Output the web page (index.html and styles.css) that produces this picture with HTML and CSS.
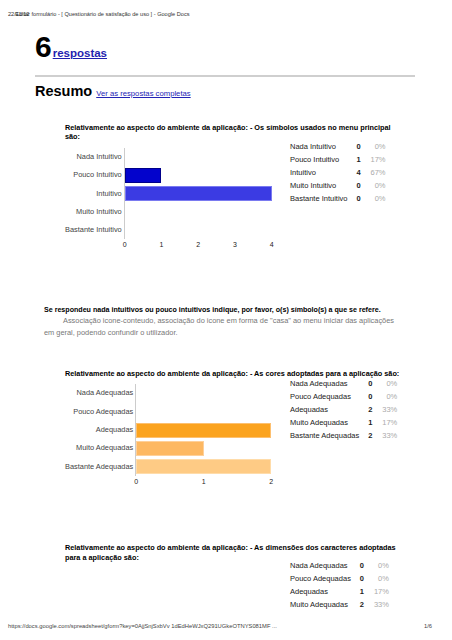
FILE: index.html
```html
<!DOCTYPE html>
<html lang="pt">
<head>
    <meta charset="UTF-8">
    <title>Editar formulário - [ Questionário de satisfação de uso ] - Google Docs</title>
    <link rel="stylesheet" href="styles.css">
</head>
<body>

    <div class="topbar">
        <span class="date">22/11/12</span>Editar formulário - [ Questionário de satisfação de uso ] - Google Docs
    </div>

    <div class="page">
        <div class="count">
            <span class="count-num">6</span><a href="#" class="count-link">respostas</a>
        </div>

        <div class="summary-head">
            <h2>Resumo</h2>
            <a href="#">Ver as respostas completas</a>
        </div>

        <!-- pergunta 1 -->
        <div class="question q1">
            <p class="q-title">Relativamente ao aspecto do ambiente da aplicação: - Os símbolos usados no menu principal são:</p>
            <div class="result">
                <div class="chart">
                    <div class="chart-grid">
                        <span class="bar-label">Nada Intuitivo</span>
                        <div class="bar-cell"></div>
                        <span class="bar-label">Pouco Intuitivo</span>
                        <div class="bar-cell"><div class="bar blue-dark" style="width: 25%;"></div></div>
                        <span class="bar-label">Intuitivo</span>
                        <div class="bar-cell"><div class="bar blue" style="width: 100%;"></div></div>
                        <span class="bar-label">Muito Intuitivo</span>
                        <div class="bar-cell"></div>
                        <span class="bar-label">Bastante Intuitivo</span>
                        <div class="bar-cell"></div>
                        <span></span>
                        <div class="ticks">
                            <span>0</span><span>1</span><span>2</span><span>3</span><span>4</span>
                        </div>
                    </div>
                </div>
                <table class="counts">
                    <tr><td>Nada Intuitivo</td><td class="n">0</td><td class="pct">0%</td></tr>
                    <tr><td>Pouco Intuitivo</td><td class="n">1</td><td class="pct">17%</td></tr>
                    <tr><td>Intuitivo</td><td class="n">4</td><td class="pct">67%</td></tr>
                    <tr><td>Muito Intuitivo</td><td class="n">0</td><td class="pct">0%</td></tr>
                    <tr><td>Bastante Intuitivo</td><td class="n">0</td><td class="pct">0%</td></tr>
                </table>
            </div>
        </div>

        <!-- pergunta 2 (texto) -->
        <div class="question q2">
            <p class="q-title">Se respondeu nada intuitivos ou pouco intuitivos indique, por favor, o(s) símbolo(s) a que se refere.</p>
            <p class="answer">Associação icone-conteudo, associação do icone em forma de "casa" ao menu iniciar das aplicações em geral, podendo confundir o utilizador.</p>
        </div>

        <!-- pergunta 3 -->
        <div class="question q3">
            <p class="q-title">Relativamente ao aspecto do ambiente da aplicação: - As cores adoptadas para a aplicação são:</p>
            <div class="result">
                <div class="chart">
                    <div class="chart-grid">
                        <span class="bar-label">Nada Adequadas</span>
                        <div class="bar-cell"></div>
                        <span class="bar-label">Pouco Adequadas</span>
                        <div class="bar-cell"></div>
                        <span class="bar-label">Adequadas</span>
                        <div class="bar-cell"><div class="bar orange" style="width: 100%;"></div></div>
                        <span class="bar-label">Muito Adequadas</span>
                        <div class="bar-cell"><div class="bar orange-mid" style="width: 50%;"></div></div>
                        <span class="bar-label">Bastante Adequadas</span>
                        <div class="bar-cell"><div class="bar orange-light" style="width: 100%;"></div></div>
                        <span></span>
                        <div class="ticks">
                            <span>0</span><span>1</span><span>2</span>
                        </div>
                    </div>
                </div>
                <table class="counts">
                    <tr><td>Nada Adequadas</td><td class="n">0</td><td class="pct">0%</td></tr>
                    <tr><td>Pouco Adequadas</td><td class="n">0</td><td class="pct">0%</td></tr>
                    <tr><td>Adequadas</td><td class="n">2</td><td class="pct">33%</td></tr>
                    <tr><td>Muito Adequadas</td><td class="n">1</td><td class="pct">17%</td></tr>
                    <tr><td>Bastante Adequadas</td><td class="n">2</td><td class="pct">33%</td></tr>
                </table>
            </div>
        </div>

        <!-- pergunta 4 -->
        <div class="question q4">
            <p class="q-title">Relativamente ao aspecto do ambiente da aplicação: - As dimensões dos caracteres adoptadas para a aplicação são:</p>
            <div class="result">
                <div class="chart"></div>
                <table class="counts">
                    <tr><td>Nada Adequadas</td><td class="n">0</td><td class="pct">0%</td></tr>
                    <tr><td>Pouco Adequadas</td><td class="n">0</td><td class="pct">0%</td></tr>
                    <tr><td>Adequadas</td><td class="n">1</td><td class="pct">17%</td></tr>
                    <tr><td>Muito Adequadas</td><td class="n">2</td><td class="pct">33%</td></tr>
                </table>
            </div>
        </div>
    </div>

    <div class="footer">
        <span>https://docs.google.com/spreadsheet/gform?key=0AjjSnjSxbVv 1dEdHeWJxQ291UGkeOTNYS081MF ...</span>
        <span>1/6</span>
    </div>

</body>
</html>
```

FILE: styles.css
```css
body {
    font-family: 'Liberation Sans', Arial, sans-serif;
    background-color: white;
    color: #222;
    margin: 0;
    padding: 0;
    width: 452px;
    height: 640px;
    overflow: hidden;
}

p {
    margin: 0;
}

.topbar {
    padding: 10px 8px 0;
    font-size: 5.6px;
    line-height: 8px;
    color: #333;
    white-space: nowrap;
}

.topbar .date {
    margin-right: -14px;
}

.page {
    margin: 0 37px 0 35px;
}

/* total de respostas */
.count {
    margin-top: 14px;
    height: 30px;
    line-height: 30px;
    white-space: nowrap;
}

.count-num {
    font-size: 30px;
    font-weight: bold;
    color: #000;
}

.count-link {
    font-size: 11.5px;
    font-weight: bold;
    color: #1f1fb0;
    margin-left: 1px;
}

.summary-head {
    margin-top: 13px;
    border-top: 2px solid #cfcfcf;
    padding-top: 7px;
    display: flex;
    align-items: baseline;
    gap: 4px;
}

.summary-head h2 {
    margin: 0;
    font-size: 14.5px;
    line-height: 15px;
    color: #000;
}

.summary-head a {
    font-size: 7.7px;
    color: #2323b5;
}

/* perguntas */
.question {
    padding-left: 30px;
}

.q-title {
    font-size: 7.3px;
    line-height: 9px;
    font-weight: bold;
    color: #000;
    width: 338px;
}

.q1 {
    margin-top: 24px;
}

.q2 {
    margin-top: 57px;
    padding-left: 9px;
}

.q2 .q-title {
    width: 360px;
    font-size: 7.1px;
}

.q2 .answer {
    width: 360px;
    font-size: 7.4px;
    line-height: 12px;
    color: #777;
    text-indent: 19px;
}

.q3 {
    margin-top: 30px;
}

.q4 {
    margin-top: 57px;
}

.q4 .q-title {
    line-height: 10px;
}

.result {
    display: flex;
    align-items: flex-start;
    gap: 15px;
}

.q4 .counts {
    margin-top: -3px;
}

/* gráfico de barras */
.chart {
    width: 210px;
    flex-shrink: 0;
}

.chart-grid {
    display: grid;
    grid-template-columns: auto 148px;
    justify-content: start;
    column-gap: 2px;
    margin-top: 7px;
}

.q3 .chart-grid {
    grid-template-columns: auto 136px;
    margin-top: 6px;
}

.bar-label {
    font-size: 7.4px;
    color: #444;
    text-align: right;
    line-height: 18.3px;
    white-space: nowrap;
}

.bar-cell {
    height: 18.3px;
    border-left: 1px solid #ccc;
    display: flex;
    align-items: center;
}

.bar {
    height: 15px;
    box-sizing: border-box;
}

.blue-dark {
    background-color: #0303cc;
    border: 1px solid #00008a;
}

.blue {
    background-color: #3b3be3;
    border: 1px solid #7a7af0;
}

.orange {
    background-color: #fba31f;
    border: 1px solid #fdc070;
}

.orange-mid {
    background-color: #fdb862;
    border: 1px solid #fed09a;
}

.orange-light {
    background-color: #fecb85;
    border: 1px solid #ffdcaa;
}

.ticks {
    display: flex;
    justify-content: space-between;
    margin: 2px -5px 0 -4px;
    font-size: 7px;
    line-height: 8px;
    color: #222;
}

.ticks span {
    width: 10px;
    text-align: center;
}

/* tabela de contagem */
.counts {
    border-collapse: collapse;
    font-size: 7.5px;
    color: #222;
}

.counts td {
    padding: 0;
    height: 12.9px;
    line-height: 12.9px;
    white-space: nowrap;
}

.counts td:first-child {
    padding-right: 5px;
}

.counts .n {
    width: 12px;
    text-align: center;
    font-weight: bold;
}

.counts .pct {
    width: 21px;
    text-align: right;
    color: #aaa;
}

.footer {
    position: absolute;
    left: 8px;
    right: 20px;
    top: 622px;
    display: flex;
    justify-content: space-between;
    font-size: 5.8px;
    line-height: 8px;
    color: #444;
}
```
